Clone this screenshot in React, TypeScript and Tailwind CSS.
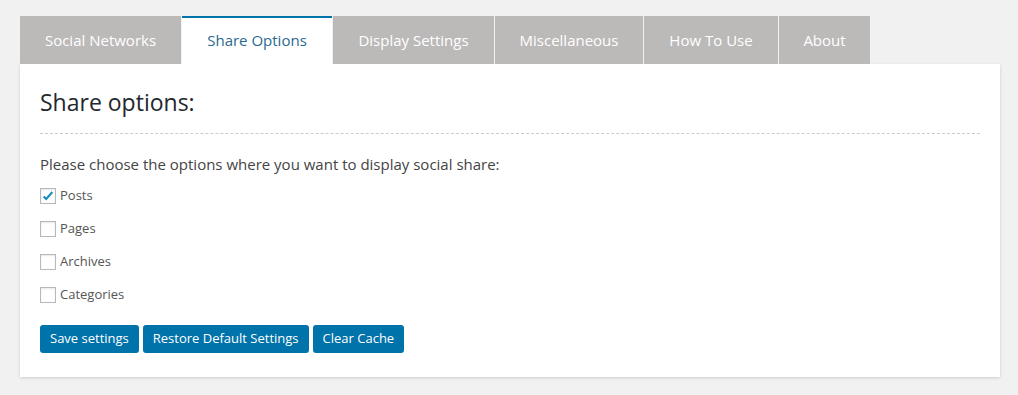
import { useState } from "react";

const tabs = [
  { label: "Social Networks", w: "w-[161px]" },
  { label: "Share Options", w: "w-[150px]" },
  { label: "Display Settings", w: "w-[161px]" },
  { label: "Miscellaneous", w: "w-[148px]" },
  { label: "How To Use", w: "w-[134px]" },
  { label: "About", w: "w-[91px]" },
];

const options = ["Posts", "Pages", "Archives", "Categories"];

function Checkbox({ checked, onChange }: { checked: boolean; onChange: () => void }) {
  return (
    <button
      type="button"
      onClick={onChange}
      className="flex h-4 w-4 items-center justify-center border border-[#b4b9be] bg-white shadow-[inset_0_1px_2px_rgba(0,0,0,0.1)]"
    >
      {checked && (
        <svg viewBox="0 0 16 16" className="h-[14px] w-[14px]">
          <path d="M3 8.5l3 3 7-8" fill="none" stroke="#1e8cbe" strokeWidth="2.4" />
        </svg>
      )}
    </button>
  );
}

export default function App() {
  const [active, setActive] = useState(1);
  const [checked, setChecked] = useState<Record<string, boolean>>({ Posts: true });

  return (
    <div className="min-h-[395px] bg-[#f1f1f1] px-5 pt-4 font-['Open_Sans',sans-serif]">
      <div className="flex gap-px">
        {tabs.map((t, i) => (
          <button
            key={t.label}
            onClick={() => setActive(i)}
            className={
              i === active
                ? `${t.w} h-12 border-t-2 border-[#0073aa] bg-white pb-[2px] text-[15px] text-[#2a6a91]`
                : `${t.w} h-12 bg-[#bcb9b9] text-[15px] text-white`
            }
          >
            {t.label}
          </button>
        ))}
      </div>
      <div className="w-[980px] bg-white px-5 pb-6 pt-[22px] shadow-[0_1px_3px_rgba(0,0,0,0.15)]">
        <h2 className="text-[23px] leading-8 text-[#23282d]">Share options:</h2>
        <div className="mt-[15px] border-t border-dashed border-[#cccccc]" />
        <p className="mt-[20px] text-[15px] leading-5 text-[#444]">
          Please choose the options where you want to display social share:
        </p>
        <div className="mt-[14px] flex flex-col gap-[17px]">
          {options.map((o) => (
            <label key={o} className="flex h-4 items-center gap-1 text-[13px] text-[#555]">
              <Checkbox
                checked={!!checked[o]}
                onChange={() => setChecked({ ...checked, [o]: !checked[o] })}
              />
              {o}
            </label>
          ))}
        </div>
        <div className="mt-[22px] flex gap-1">
          {["Save settings", "Restore Default Settings", "Clear Cache"].map((b) => (
            <button
              key={b}
              className="h-7 rounded-[3px] bg-[#0073aa] px-[10px] text-[13px] text-white"
            >
              {b}
            </button>
          ))}
        </div>
      </div>
    </div>
  );
}
